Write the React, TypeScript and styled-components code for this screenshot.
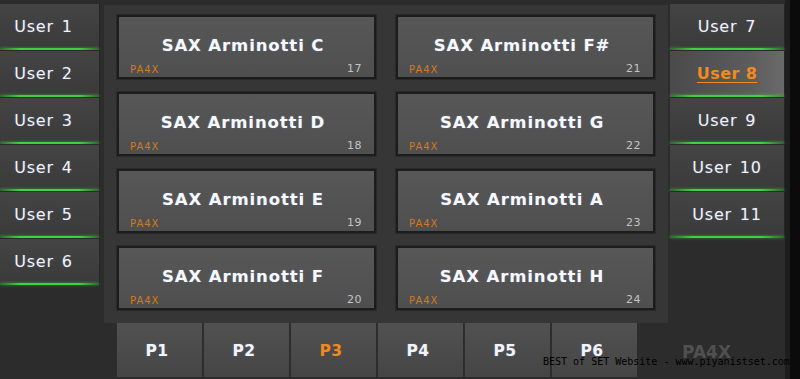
import styled, { createGlobalStyle, css } from "styled-components";

const GlobalStyle = createGlobalStyle`
  html, body {
    margin: 0;
    padding: 0;
    background: #0a0a0a;
  }
  * {
    box-sizing: border-box;
  }
`;

const Page = styled.div`
  position: relative;
  width: 800px;
  height: 379px;
  display: flex;
  background: #2c2c2c;
  border-right: 10px solid #0b0b0b;
  font-family: "DejaVu Sans", Verdana, sans-serif;
  overflow: hidden;
`;

const Side = styled.div<{ $width: number }>`
  width: ${({ $width }) => $width}px;
  display: flex;
  flex-direction: column;
  padding-top: 3px;
`;

const RightSide = styled(Side)`
  border-right: 5px solid #1e1e1e;
`;

const UserButton = styled.div<{ $active?: boolean; $left?: boolean }>`
  position: relative;
  height: 47px;
  display: flex;
  align-items: center;
  justify-content: center;
  padding-bottom: 2px;
  padding-right: ${({ $left }) => ($left ? "12px" : "0")};
  background: linear-gradient(to bottom, #444444, #3a3a3a);
  border-top: 1px solid #2a2a2a;
  border-right: 1px solid #262626;
  color: #f2f2f2;
  font-size: 16px;
  letter-spacing: 0.8px;
  word-spacing: 2px;
  text-shadow: 0 0 2px rgba(120, 150, 255, 0.35);
  &:after {
    content: "";
    position: absolute;
    left: 0;
    right: 0;
    bottom: 0;
    height: 2px;
    background: linear-gradient(
      to right,
      rgba(40, 160, 40, 0.4),
      #3fd23f 20%,
      #3fd23f 80%,
      rgba(40, 160, 40, 0.4)
    );
    box-shadow: 0 0 3px rgba(70, 220, 70, 0.6);
  }
  ${({ $active }) =>
    $active &&
    css`
      background: linear-gradient(to right, #4a4a4a, #5c5c5c 70%, #6a6a6a);
      color: #f28a1e;
      font-weight: bold;
      letter-spacing: 0.4px;
      word-spacing: 0;
      text-decoration: underline;
      text-underline-offset: 3px;
      text-shadow: none;
    `}
`;

const Center = styled.div`
  width: 566px;
  margin-left: 4px;
  display: flex;
  flex-direction: column;
`;

const Panel = styled.div`
  margin-top: 5px;
  margin-right: 2px;
  height: 318px;
  padding: 10px 13px 0 13px;
  background: #363636;
  display: grid;
  grid-template-columns: 259px 259px;
  grid-auto-rows: 64px;
  column-gap: 20px;
  row-gap: 13px;
`;

const Card = styled.div`
  position: relative;
  background: linear-gradient(to bottom, #575757, #4f4f4f);
  border: 2px solid #1c1c1c;
  box-shadow: 0 0 0 1px #2a2a2a;
  display: flex;
  flex-direction: column;
  padding: 0 12px 2px 11px;
`;

const CardTitle = styled.div`
  flex: 1;
  display: flex;
  align-items: center;
  justify-content: center;
  padding-top: 12px;
  padding-right: 6px;
  color: #f8f8f8;
  font-size: 16.5px;
  font-weight: bold;
  letter-spacing: 0.9px;
  text-shadow: 0 0 2px rgba(120, 170, 255, 0.35);
`;

const CardFoot = styled.div`
  display: flex;
  justify-content: space-between;
  align-items: flex-end;
  height: 13px;
`;

const Brand = styled.span`
  color: #d27b1c;
  font-size: 10px;
  letter-spacing: 1px;
`;

const Num = styled.span`
  color: #c4c4c4;
  font-size: 11px;
  letter-spacing: 0.5px;
`;

const Tabs = styled.div`
  display: flex;
  gap: 1px;
  margin-left: 12px;
  height: 54px;
`;

const Tab = styled.div<{ $active?: boolean }>`
  width: 86px;
  display: flex;
  align-items: center;
  justify-content: center;
  padding-top: 2px;
  padding-right: 5px;
  background: linear-gradient(to bottom, #515151, #454545);
  border-left: 1px solid #2e2e2e;
  color: ${({ $active }) => ($active ? "#f08a1c" : "#f4f4f4")};
  font-size: 15.5px;
  font-weight: bold;
  letter-spacing: 0.5px;
  text-shadow: ${({ $active }) =>
    $active ? "none" : "0 0 2px rgba(120, 170, 255, 0.4)"};
`;

const Model = styled.div`
  margin-top: auto;
  height: 54px;
  padding-right: 42px;
  display: flex;
  align-items: center;
  justify-content: center;
  color: #505050;
  font-size: 17px;
  font-weight: bold;
`;

const Watermark = styled.div`
  position: absolute;
  left: 543px;
  top: 356px;
  font-family: "DejaVu Sans Mono", "Liberation Mono", monospace;
  font-size: 10px;
  line-height: 12px;
  letter-spacing: 0;
  color: #000;
  white-space: pre;
`;

const leftUsers = ["User 1", "User 2", "User 3", "User 4", "User 5", "User 6"];
const rightUsers = ["User 7", "User 8", "User 9", "User 10", "User 11"];

const sounds = [
  { name: "SAX Arminotti C", n: 17 },
  { name: "SAX Arminotti F#", n: 21 },
  { name: "SAX Arminotti D", n: 18 },
  { name: "SAX Arminotti G", n: 22 },
  { name: "SAX Arminotti E", n: 19 },
  { name: "SAX Arminotti A", n: 23 },
  { name: "SAX Arminotti F", n: 20 },
  { name: "SAX Arminotti H", n: 24 },
];

const pages = ["P1", "P2", "P3", "P4", "P5", "P6"];

const App = () => {
  return (
    <>
      <GlobalStyle />
      <Page>
        <Side $width={100}>
          {leftUsers.map((u) => (
            <UserButton key={u} $left>
              {u}
            </UserButton>
          ))}
        </Side>
        <Center>
          <Panel>
            {sounds.map((s) => (
              <Card key={s.n}>
                <CardTitle>{s.name}</CardTitle>
                <CardFoot>
                  <Brand>PA4X</Brand>
                  <Num>{s.n}</Num>
                </CardFoot>
              </Card>
            ))}
          </Panel>
          <Tabs>
            {pages.map((p) => (
              <Tab key={p} $active={p === "P3"}>
                {p}
              </Tab>
            ))}
          </Tabs>
        </Center>
        <RightSide $width={120}>
          {rightUsers.map((u) => (
            <UserButton key={u} $active={u === "User 8"}>
              {u}
            </UserButton>
          ))}
          <Model>PA4X</Model>
        </RightSide>
        <Watermark>BEST of SET Website - www.piyanistset.com</Watermark>
      </Page>
    </>
  );
};

export default App;
